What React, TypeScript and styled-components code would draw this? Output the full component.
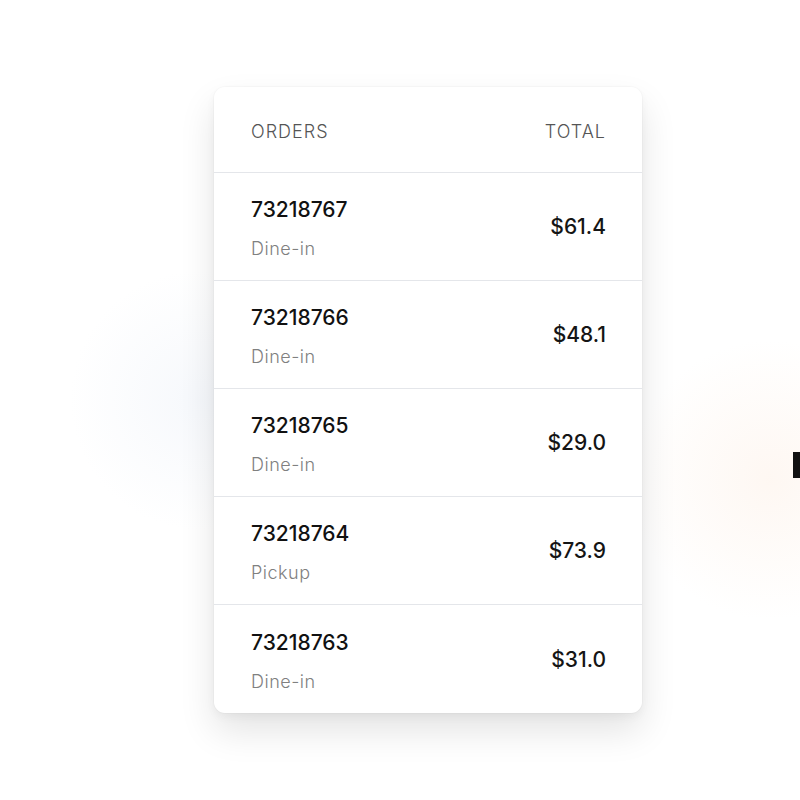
import React from 'react';
import styled, { createGlobalStyle } from 'styled-components';

const GlobalStyle = createGlobalStyle`
  html, body {
    margin: 0;
    padding: 0;
    background: #ffffff;
  }
  body {
    font-family: Inter, 'Liberation Sans', sans-serif;
    color: #111;
  }
  * {
    box-sizing: border-box;
  }
`;

const Page = styled.div`
  width: 800px;
  height: 800px;
  display: flex;
  align-items: flex-start;
  overflow: hidden;
  background:
    radial-gradient(circle at 200px 400px, rgba(235, 240, 248, 0.45) 0, rgba(255, 255, 255, 0) 130px),
    radial-gradient(circle at 770px 480px, rgba(253, 240, 230, 0.5) 0, rgba(255, 255, 255, 0) 140px),
    #ffffff;
`;

const Card = styled.div`
  margin: 87px 0 0 214px;
  width: 428px;
  background: #fff;
  border-radius: 11px;
  box-shadow: 0 0 0 1px rgba(0, 0, 0, 0.02), 0 18px 36px rgba(0, 0, 0, 0.11), 0 4px 10px rgba(0, 0, 0, 0.04);
  overflow: hidden;
`;

const Header = styled.div`
  height: 86px;
  display: flex;
  align-items: center;
  justify-content: space-between;
  padding: 3px 36px 0 37px;
  border-bottom: 1px solid #e4e6ea;
`;

const HeadLabel = styled.span`
  font-size: 18px;
  font-weight: 300;
  letter-spacing: 1px;
  color: #555;
`;

const Row = styled.div<{ $last?: boolean }>`
  height: 108px;
  display: flex;
  align-items: center;
  justify-content: space-between;
  padding: 0 36px 0 37px;
  border-bottom: ${p => (p.$last ? 'none' : '1px solid #e4e6ea')};
`;

const Info = styled.div`
  display: flex;
  flex-direction: column;
  gap: 16px;
  margin-top: 3px;
`;

const OrderId = styled.span`
  font-size: 21px;
  font-weight: 500;
  color: #111;
`;

const Kind = styled.span`
  font-size: 18px;
  font-weight: 300;
  letter-spacing: 0.5px;
  color: #808080;
`;

const Price = styled.span`
  font-size: 21px;
  font-weight: 500;
  color: #151515;
`;

const EdgeMark = styled.div`
  margin: 452px 0 0 auto;
  width: 7px;
  height: 26px;
  background: #111;
`;

const orders = [
  { id: '73218767', kind: 'Dine-in', total: '$61.4' },
  { id: '73218766', kind: 'Dine-in', total: '$48.1' },
  { id: '73218765', kind: 'Dine-in', total: '$29.0' },
  { id: '73218764', kind: 'Pickup', total: '$73.9' },
  { id: '73218763', kind: 'Dine-in', total: '$31.0' },
];

const App: React.FC = () => {
  return (
    <>
      <GlobalStyle />
      <Page>
        <Card>
          <Header>
            <HeadLabel>ORDERS</HeadLabel>
            <HeadLabel>TOTAL</HeadLabel>
          </Header>
          {orders.map((o, i) => (
            <Row key={o.id} $last={i === orders.length - 1}>
              <Info>
                <OrderId>{o.id}</OrderId>
                <Kind>{o.kind}</Kind>
              </Info>
              <Price>{o.total}</Price>
            </Row>
          ))}
        </Card>
        <EdgeMark />
      </Page>
    </>
  );
};

export default App;
